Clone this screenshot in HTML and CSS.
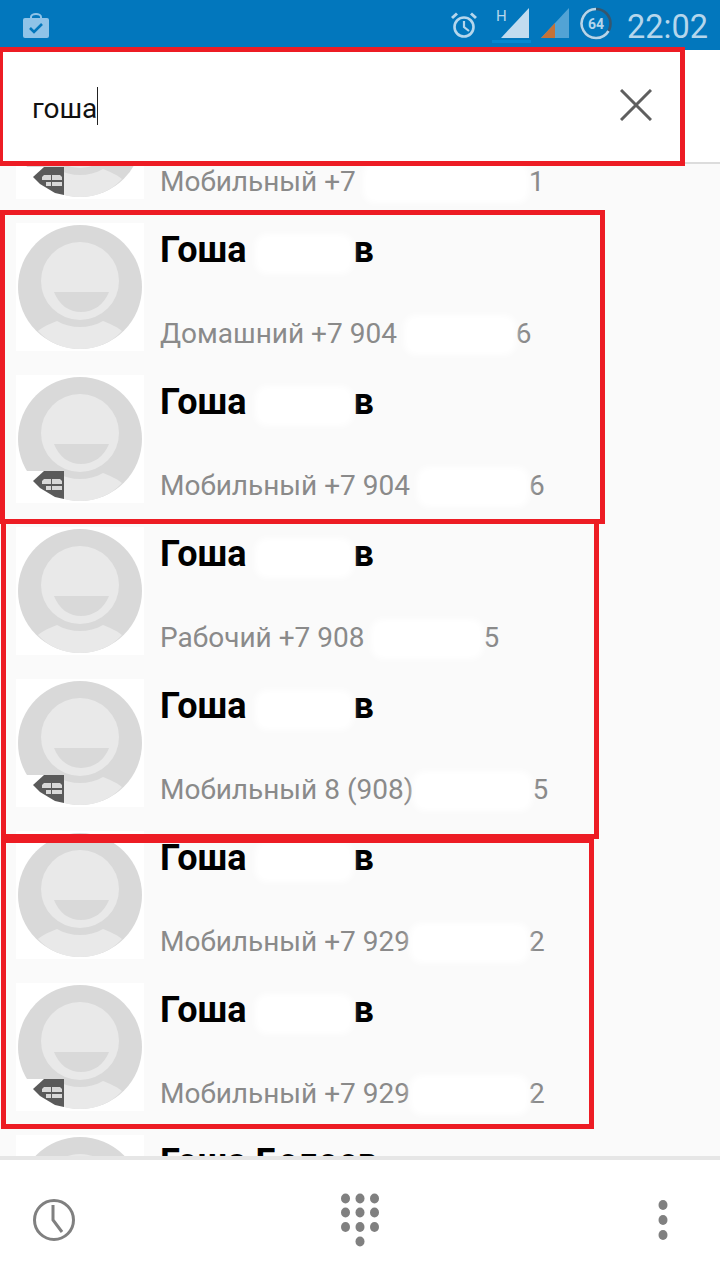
FILE: index.html
```html
<!DOCTYPE html>
<html lang="ru">
<head>
    <meta charset="UTF-8">
    <meta name="viewport" content="width=device-width, initial-scale=1.0">
    <title>Поиск контактов</title>
    <link rel="stylesheet" href="styles.css">
</head>
<body>
    <svg class="defs" width="0" height="0">
        <symbol id="avatar" viewBox="0 0 128 128">
            <rect width="128" height="128" fill="#fff"/>
            <circle cx="64" cy="64" r="62" fill="#d9d9d9"/>
            <circle cx="64" cy="58" r="39" fill="#e9e9e9"/>
            <path d="M38 69H93C88 82 77 89 65 89C53 89 43 82 38 69Z" fill="#d9d9d9"/>
            <path d="M22 108C29 102 37 100 41 98C55 106 73 106 87 98C92 100 100 103 106 108C95 120 80 126 64 126C48 126 33 120 22 108Z" fill="#e9e9e9"/>
        </symbol>
        <symbol id="sim" viewBox="0 0 48 32">
            <rect width="48" height="32" fill="#fff"/>
            <path d="M17 10L28 0H48V28L39 26L24 17Z" fill="#5a5a5a"/>
            <path d="M26 10L28 8H35V13H26ZM36 8H44L46 10V13H36ZM30 15H35V19H30ZM36 15H46V19H36Z" fill="#d8d8d8"/>
        </symbol>
    </svg>

    <div class="phone">
        <div class="status-bar">
            <svg class="status-task" width="26" height="25" viewBox="0 0 26 25">
                <path d="M8 7V4a5 3 0 0 1 10 0V7" fill="none" stroke="#8fc3e8" stroke-width="2"/>
                <rect x="0" y="5" width="26" height="20" rx="2" fill="#8fc3e8"/>
                <path d="M7 15L11 19L19 11" fill="none" stroke="#0277bd" stroke-width="2.6"/>
            </svg>
            <div class="status-right">
                <svg class="alarm" width="26" height="26" viewBox="0 0 26 26">
                    <circle cx="13" cy="15" r="9.5" fill="none" stroke="#b5d6ec" stroke-width="2.6"/>
                    <path d="M13 9V15L18 19" fill="none" stroke="#b5d6ec" stroke-width="2.2"/>
                    <path d="M1 6L6 1.500M25 6L20 1.500" stroke="#b5d6ec" stroke-width="3"/>
                </svg>
                <div class="signal-h">
                    <span class="signal-letter">H</span>
                    <svg width="39" height="35" viewBox="0 0 39 35">
                        <path d="M9 30L37 0V30Z" fill="#c2dcef"/>
                        <rect x="0" y="32" width="39" height="3" fill="#0288d1"/>
                    </svg>
                </div>
                <svg class="signal-two" width="28" height="30" viewBox="0 0 28 30">
                    <path d="M0 30L28 0V30Z" fill="#52a3d5"/>
                    <path d="M0 30L14 15V30Z" fill="#c47238"/>
                </svg>
                <div class="battery">
                    <svg width="32" height="33" viewBox="0 0 32 33">
                        <circle cx="16" cy="16.500" r="14.500" fill="none" stroke="#37566e" stroke-width="2.600"/>
                        <path d="M28.500 24A14.500 14.500 0 1 1 16 2" fill="none" stroke="#b5d6ec" stroke-width="2.600"/>
                    </svg>
                    <span class="battery-num">64</span>
                </div>
                <span class="clock">22:02</span>
            </div>
        </div>

        <div class="search-bar">
            <div class="search-text"><span class="search-word">гоша</span><span class="caret"></span></div>
            <svg class="search-clear" width="32" height="32" viewBox="0 0 32 32">
                <path d="M1 1L31 31M31 1L1 31" stroke="#5f5f5f" stroke-width="3"/>
            </svg>
        </div>

        <div class="contact-list">
            <div class="row row-first">
                <div class="avatar">
                    <svg class="avatar-img"><use href="#avatar"/></svg>
                    <svg class="sim-badge"><use href="#sim"/></svg>
                </div>
                <div class="info">
                    <div class="name">Гоша</div>
                    <div class="number">Мобильный +7 <span class="smudge smudge-1"></span>1</div>
                </div>
            </div>
            <div class="row">
                <div class="avatar"><svg class="avatar-img"><use href="#avatar"/></svg></div>
                <div class="info">
                    <div class="name">Гоша <span class="smudge smudge-2"></span>в</div>
                    <div class="number">Домашний +7 904 <span class="smudge smudge-3"></span>6</div>
                </div>
            </div>
            <div class="row">
                <div class="avatar">
                    <svg class="avatar-img"><use href="#avatar"/></svg>
                    <svg class="sim-badge"><use href="#sim"/></svg>
                </div>
                <div class="info">
                    <div class="name">Гоша <span class="smudge smudge-2"></span>в</div>
                    <div class="number">Мобильный +7 904 <span class="smudge smudge-3"></span>6</div>
                </div>
            </div>
            <div class="row">
                <div class="avatar"><svg class="avatar-img"><use href="#avatar"/></svg></div>
                <div class="info">
                    <div class="name">Гоша <span class="smudge smudge-2"></span>в</div>
                    <div class="number">Рабочий +7 908 <span class="smudge smudge-5"></span>5</div>
                </div>
            </div>
            <div class="row">
                <div class="avatar">
                    <svg class="avatar-img"><use href="#avatar"/></svg>
                    <svg class="sim-badge"><use href="#sim"/></svg>
                </div>
                <div class="info">
                    <div class="name">Гоша <span class="smudge smudge-2"></span>в</div>
                    <div class="number">Мобильный 8 (908)<span class="smudge smudge-6"></span>5</div>
                </div>
            </div>
            <div class="row">
                <div class="avatar"><svg class="avatar-img"><use href="#avatar"/></svg></div>
                <div class="info">
                    <div class="name">Гоша <span class="smudge smudge-2"></span>в</div>
                    <div class="number">Мобильный +7 929<span class="smudge smudge-6"></span>2</div>
                </div>
            </div>
            <div class="row">
                <div class="avatar">
                    <svg class="avatar-img"><use href="#avatar"/></svg>
                    <svg class="sim-badge"><use href="#sim"/></svg>
                </div>
                <div class="info">
                    <div class="name">Гоша <span class="smudge smudge-2"></span>в</div>
                    <div class="number">Мобильный +7 929<span class="smudge smudge-6"></span>2</div>
                </div>
            </div>
            <div class="row">
                <div class="avatar"><svg class="avatar-img"><use href="#avatar"/></svg></div>
                <div class="info">
                    <div class="name">Гоша Белоев</div>
                </div>
            </div>
        </div>

        <div class="bottom-bar">
            <svg class="recent-btn" width="42" height="42" viewBox="0 0 42 42">
                <circle cx="21" cy="21" r="19.500" fill="none" stroke="#808080" stroke-width="3"/>
                <path d="M20 6V21L29 33" fill="none" stroke="#808080" stroke-width="3"/>
            </svg>
            <svg class="dial-btn" width="40" height="54" viewBox="0 0 40 54">
                <g fill="#808080">
                    <ellipse cx="5.500" cy="5.500" rx="4.500" ry="5"/><ellipse cx="20" cy="5.500" rx="4.500" ry="5"/><ellipse cx="34.500" cy="5.500" rx="4.500" ry="5"/>
                    <ellipse cx="5.500" cy="19.500" rx="4.500" ry="5"/><ellipse cx="20" cy="19.500" rx="4.500" ry="5"/><ellipse cx="34.500" cy="19.500" rx="4.500" ry="5"/>
                    <ellipse cx="5.500" cy="34" rx="4.500" ry="5"/><ellipse cx="20" cy="34" rx="4.500" ry="5"/><ellipse cx="34.500" cy="34" rx="4.500" ry="5"/>
                    <ellipse cx="20" cy="48.500" rx="4.500" ry="5"/>
                </g>
            </svg>
            <svg class="more-btn" width="10" height="40" viewBox="0 0 10 40">
                <g fill="#808080">
                    <ellipse cx="5" cy="5" rx="4.500" ry="5"/><ellipse cx="5" cy="20" rx="4.500" ry="5"/><ellipse cx="5" cy="35" rx="4.500" ry="5"/>
                </g>
            </svg>
        </div>

        <!-- red frames drawn over the screenshot -->
        <div class="mark mark-search"></div>
        <div class="mark mark-a"></div>
        <div class="mark mark-b"></div>
        <div class="mark mark-c"></div>
    </div>
</body>
</html>
```

FILE: styles.css
```css
body {
    margin: 0;
    font-family: 'Roboto', 'Liberation Sans', sans-serif;
    background-color: #fafafa;
}
.defs {
    position: absolute;
}
.phone {
    position: relative;
    width: 720px;
    height: 1280px;
    display: flex;
    flex-direction: column;
    overflow: hidden;
}
.status-bar {
    height: 50px;
    flex: none;
    background-color: #0277bd;
    display: flex;
    align-items: center;
    justify-content: space-between;
    padding: 0 12px 0 23px;
    box-sizing: border-box;
}
.status-right {
    display: flex;
    align-items: center;
}
.signal-h {
    position: relative;
    display: flex;
    margin-left: 15px;
}
.signal-two {
    margin: -4px 0 0 10px;
}
.signal-letter {
    position: absolute;
    left: 4px;
    top: -1px;
    font-size: 15px;
    color: #b5d6ec;
}
.battery {
    position: relative;
    display: flex;
    margin: -3px 0 0 11px;
}
.battery-num {
    position: absolute;
    inset: 0;
    display: flex;
    align-items: center;
    justify-content: center;
    font-size: 14px;
    font-weight: 700;
    color: #b5d6ec;
}
.clock {
    margin: 3px 0 0 15px;
    font-size: 32.5px;
    color: #b5d6ec;
}
.search-bar {
    height: 112px;
    flex: none;
    background-color: #fff;
    border-bottom: 2px solid #dcdcdc;
    display: flex;
    align-items: center;
    justify-content: space-between;
    padding: 0 68px 0 32px;
}
.search-text {
    font-size: 28px;
    color: #111;
    display: flex;
    align-items: center;
}
.search-word {
    padding-top: 5px;
}
.caret {
    width: 1px;
    height: 38px;
    background-color: #222;
}
.search-clear {
    margin-top: -3px;
}
.contact-list {
    flex: 1;
    min-height: 0;
    overflow: hidden;
}
.row {
    height: 152px;
    display: flex;
    padding: 0 16px;
    box-sizing: border-box;
}
.row-first {
    margin-top: -93px;
}
.avatar {
    position: relative;
    width: 128px;
    height: 128px;
    flex: none;
}
.avatar-img {
    display: block;
    width: 128px;
    height: 128px;
}
.sim-badge {
    position: absolute;
    left: 0;
    top: 96px;
    width: 48px;
    height: 32px;
}
.info {
    margin-left: 16px;
    height: 131px;
    display: flex;
    flex-direction: column;
    justify-content: space-between;
}
.name {
    font-size: 36px;
    font-weight: 700;
    line-height: 55px;
    color: #000;
    white-space: nowrap;
}
.number {
    font-size: 28px;
    line-height: 40px;
    color: #8a8a8a;
    white-space: nowrap;
}
.smudge {
    display: inline-block;
    height: 40px;
    margin-bottom: -12px;
    background-color: #fff;
    border-radius: 12px;
    filter: blur(3px);
}
.smudge-1 { width: 166px; }
.smudge-2 { width: 98px; }
.smudge-3 { width: 112px; }
.smudge-5 { width: 112px; }
.smudge-6 { width: 119px; }
.bottom-bar {
    height: 120px;
    flex: none;
    background-color: #fff;
    border-top: 4px solid #e6e6e6;
    display: grid;
    grid-template-columns: 1fr 1fr 1fr;
    align-items: center;
    padding: 0 33px;
}
.dial-btn {
    justify-self: center;
}
.more-btn {
    justify-self: end;
    margin-right: 19px;
}
.mark {
    position: absolute;
    box-sizing: border-box;
    border: 5px solid #ed1c24;
}
.mark-search {
    left: -2px;
    top: 47px;
    width: 687px;
    height: 119px;
}
.mark-a {
    left: 0;
    top: 210px;
    width: 605px;
    height: 314px;
}
.mark-b {
    left: 1px;
    top: 519px;
    width: 598px;
    height: 320px;
}
.mark-c {
    left: 1px;
    top: 838px;
    width: 593px;
    height: 291px;
}
```
